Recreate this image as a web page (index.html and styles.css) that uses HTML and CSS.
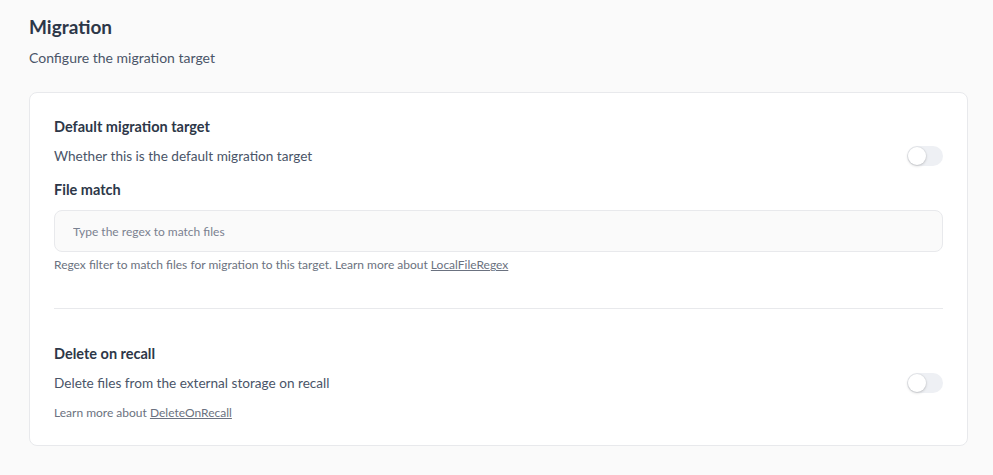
FILE: index.html
```html
<!DOCTYPE html>
<html lang="en">
<head>
<meta charset="utf-8">
<title>Migration</title>
<link rel="stylesheet" href="styles.css">
</head>
<body>
<main class="page">
  <h1 class="title">Migration</h1>
  <p class="subtitle">Configure the migration target</p>
  <section class="card">
    <div class="field">
      <h2 class="label">Default migration target</h2>
      <div class="row">
        <span class="desc">Whether this is the default migration target</span>
        <span class="toggle"><span class="knob"></span></span>
      </div>
    </div>
    <div class="field field-file">
      <h2 class="label">File match</h2>
      <input class="input" type="text" placeholder="Type the regex to match files">
      <p class="help">Regex filter to match files for migration to this target. Learn more about <a href="#">LocalFileRegex</a></p>
    </div>
    <hr class="divider">
    <div class="field field-recall">
      <h2 class="label">Delete on recall</h2>
      <div class="row">
        <span class="desc">Delete files from the external storage on recall</span>
        <span class="toggle"><span class="knob"></span></span>
      </div>
      <p class="help">Learn more about <a href="#">DeleteOnRecall</a></p>
    </div>
  </section>
</main>
</body>
</html>
```

FILE: styles.css
```css
* { box-sizing: border-box; }
html, body { margin: 0; padding: 0; }
body {
  background: #fafafa;
  font-family: Lato, "Liberation Sans", sans-serif;
  color: #2d3748;
}
.page {
  padding: 15px 25px 0 29px;
}
.title {
  margin: 0;
  font-size: 19px;
  line-height: 24px;
  font-weight: 700;
  color: #2d3748;
}
.subtitle {
  margin: 9px 0 0;
  font-size: 14px;
  line-height: 20px;
  color: #4a5568;
}
.card {
  margin-top: 24px;
  background: #fff;
  border: 1px solid #e8e9ec;
  border-radius: 8px;
  padding: 24px 24px 24px;
}
.label {
  margin: 0;
  font-size: 14.5px;
  line-height: 20px;
  font-weight: 700;
  color: #2d3748;
}
.row {
  display: flex;
  align-items: center;
  justify-content: space-between;
  margin-top: 9px;
}
.desc {
  font-size: 13.6px;
  line-height: 20px;
  color: #4a5568;
}
.toggle {
  width: 36px;
  height: 20px;
  border-radius: 10px;
  background: #eef0f4;
  display: flex;
  align-items: center;
  padding: 1px;
}
.knob {
  width: 18px;
  height: 18px;
  border-radius: 50%;
  background: #fff;
  box-shadow: 0 1px 3px rgba(0,0,0,0.18), 0 0 0 1px rgba(0,0,0,0.03);
}
.field-file { margin-top: 14px; }
.input {
  display: block;
  width: 100%;
  height: 42px;
  margin-top: 10px;
  background: #fafafa;
  border: 1px solid #e8e9ec;
  border-radius: 8px;
  padding: 0 18px;
  font-family: inherit;
  font-size: 12px;
  color: #2d3748;
  outline: none;
}
.input::placeholder { color: #7a8190; }
.help {
  margin: 5px 0 0;
  font-size: 12px;
  line-height: 16px;
  color: #6b7280;
}
.help a { color: #6b7280; text-decoration: underline; }
.divider {
  margin: 35px 0 0;
  border: 0;
  border-top: 1px solid #e8e9ec;
}
.field-recall { margin-top: 35px; }
.field-recall .help { margin-top: 12px; }
```
